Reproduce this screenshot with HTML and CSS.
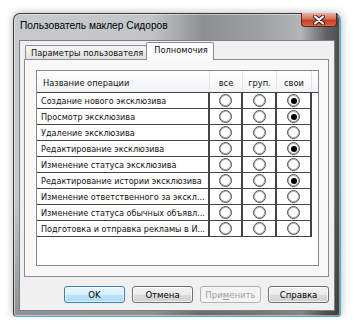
FILE: index.html
```html
<!DOCTYPE html>
<html lang="ru">
<head>
  <meta charset="UTF-8" />
  <title>Пользователь маклер Сидоров</title>
  <link rel="stylesheet" href="styles.css">
</head>
<body>

<div class="window">
  <div class="titlebar">
    <span class="title">Пользователь маклер Сидоров</span>
    <div class="close">
      <svg width="14" height="10" viewBox="0 0 14 10">
        <path d="M3 1.5 L11 8.5 M11 1.5 L3 8.5" stroke="#3a1810" stroke-width="4" stroke-linecap="round" />
        <path d="M3 1.5 L11 8.5 M11 1.5 L3 8.5" stroke="#ffffff" stroke-width="2.2" stroke-linecap="round" />
      </svg>
    </div>
  </div>

  <div class="client">
    <!-- Tabs -->
    <div class="tabs">
      <div class="tab">Параметры пользователя</div>
      <div class="tab active">Полномочия</div>
    </div>

    <div class="panel">
      <div class="grid">
        <div class="row head">
          <div class="cell name">Название операции</div>
          <div class="cell">все</div>
          <div class="cell">груп.</div>
          <div class="cell">свои</div>
          <div class="cell filler"></div>
        </div>

        <div class="row">
          <div class="cell name">Создание нового эксклюзива</div>
          <div class="cell"><span class="radio"></span></div>
          <div class="cell"><span class="radio"></span></div>
          <div class="cell"><span class="radio on"></span></div>
        </div>
        <div class="row">
          <div class="cell name">Просмотр эксклюзива</div>
          <div class="cell"><span class="radio"></span></div>
          <div class="cell"><span class="radio"></span></div>
          <div class="cell"><span class="radio on"></span></div>
        </div>
        <div class="row">
          <div class="cell name">Удаление эксклюзива</div>
          <div class="cell"><span class="radio"></span></div>
          <div class="cell"><span class="radio"></span></div>
          <div class="cell"><span class="radio"></span></div>
        </div>
        <div class="row">
          <div class="cell name">Редактирование эксклюзива</div>
          <div class="cell"><span class="radio"></span></div>
          <div class="cell"><span class="radio"></span></div>
          <div class="cell"><span class="radio on"></span></div>
        </div>
        <div class="row">
          <div class="cell name">Изменение статуса эксклюзива</div>
          <div class="cell"><span class="radio"></span></div>
          <div class="cell"><span class="radio"></span></div>
          <div class="cell"><span class="radio"></span></div>
        </div>
        <div class="row">
          <div class="cell name">Редактирование истории эксклюзива</div>
          <div class="cell"><span class="radio"></span></div>
          <div class="cell"><span class="radio"></span></div>
          <div class="cell"><span class="radio on"></span></div>
        </div>
        <div class="row">
          <div class="cell name">Изменение ответственного за экскл...</div>
          <div class="cell"><span class="radio"></span></div>
          <div class="cell"><span class="radio"></span></div>
          <div class="cell"><span class="radio"></span></div>
        </div>
        <div class="row">
          <div class="cell name">Изменение статуса обычных объявл...</div>
          <div class="cell"><span class="radio"></span></div>
          <div class="cell"><span class="radio"></span></div>
          <div class="cell"><span class="radio"></span></div>
        </div>
        <div class="row">
          <div class="cell name">Подготовка и отправка рекламы в И...</div>
          <div class="cell"><span class="radio"></span></div>
          <div class="cell"><span class="radio"></span></div>
          <div class="cell"><span class="radio"></span></div>
        </div>
      </div>
    </div>

    <!-- Actions -->
    <div class="actions">
      <button class="btn btn-default">OK</button>
      <button class="btn">Отмена</button>
      <button class="btn" disabled>При<u>м</u>енить</button>
      <button class="btn">Справка</button>
    </div>
  </div>
</div>

</body>
</html>
```

FILE: styles.css
```css
*, *::before, *::after { box-sizing: border-box; }

:root {
  --frame-line: #3b3b3b;
  --edge-cyan:  #39b8d8;
  --client-bg:  #f0f0f0;
  --tab-line:   #898c95;
  --grid-line:  #444444;
  --text:       #111111;
  --ui-font:    'DejaVu Sans Condensed', 'DejaVu Sans', sans-serif;
}

body {
  margin: 0;
  background: #ffffff;
  font-family: var(--ui-font);
  font-size: 9.2px;
  color: var(--text);
}

/* Window frame */
.window {
  margin: 13px 0 0 13px;
  width: 328px;
  border: 1px solid var(--frame-line);
  border-right-color: var(--edge-cyan);
  border-bottom-color: var(--edge-cyan);
  border-radius: 7px 7px 4px 4px;
  padding: 0 5px 5px 5px;
  background:
    linear-gradient(to bottom, rgba(0,0,0,0) 60%, rgba(40,40,40,.35) 100%),
    linear-gradient(to right, #c6cacd 0%, #c3c6c9 42%, #8e8f90 58%, #9d9fa0 75%, #b3b6b8 88%, #5f6162 96%, #4a4c4d 100%);
  box-shadow: 0 0 8px rgba(0,0,0,.3), inset 0 0 0 1px rgba(255,255,255,.45);
}

.titlebar {
  height: 26px;
  display: flex;
  align-items: flex-start;
  justify-content: space-between;
}

.title {
  margin: 6px 0 0 1px;
  font-family: 'Liberation Sans', Arial, sans-serif;
  font-size: 10.2px;
  color: #000;
}

.close {
  margin: -1px -2px 0 0;
  width: 36px;
  height: 14px;
  border: 1px solid #5b2416;
  border-top: none;
  border-radius: 0 0 4px 4px;
  background: linear-gradient(to bottom, #eab0a0 0%, #d9735c 45%, #c4401f 55%, #d6644a 100%);
  display: flex;
  align-items: center;
  justify-content: center;
}

/* Client area */
.client {
  background: var(--client-bg);
  border: 1px solid #7d7f80;
  padding: 1px 5px 7px 4px;
}

.tabs {
  display: flex;
  align-items: flex-end;
  height: 17px;
  padding-left: 1px;
}

.tab {
  height: 14px;
  padding: 0 3px 0 5px;
  line-height: 13px;
  border: 1px solid var(--tab-line);
  border-bottom: none;
  border-radius: 2px 2px 0 0;
  background: linear-gradient(to bottom, #f5f5f5, #e2e2e2);
  white-space: nowrap;
}

.tab.active {
  height: 18px;
  margin-bottom: -1px;
  margin-left: -1px;
  padding: 0 5px 0 7px;
  line-height: 14px;
  background: #fbfbfb;
  position: relative;
}

.panel {
  height: 218px;
  border: 1px solid var(--tab-line);
  background: #f8f8f8;
  padding: 10px 9px 0 11px;
}

/* Permissions grid */
.grid {
  height: 196px;
  border: 1px solid #828790;
  background: #ffffff;
}

.row {
  display: grid;
  grid-template-columns: 173px 33px 34px 35px;
  height: 16px;
  border-bottom: 1px solid var(--grid-line);
  width: 275px;
}

.row.head {
  grid-template-columns: 173px 33px 34px 35px 1fr;
  width: auto;
  height: 22px;
  background: linear-gradient(to bottom, #ffffff 0%, #f7f8fa 60%, #f1f2f4 100%);
}

.cell {
  border-right: 2px solid var(--grid-line);
  display: flex;
  align-items: center;
  justify-content: center;
  overflow: hidden;
  white-space: nowrap;
}

.cell.name {
  justify-content: flex-start;
  padding-left: 4px;
  font-size: 9px;
}

.head .cell {
  border-right: 1px solid #e3e4e6;
  padding-top: 2px;
}

.head .cell.name { padding-left: 6px; font-size: 9.2px; }
.head .cell.filler { border-right: none; }

.radio {
  width: 13px;
  height: 13px;
  border-radius: 50%;
  border: 1px solid #505050;
  background: #ffffff;
  box-shadow: inset 0 0 0 1px #b4b4b4;
  display: flex;
  align-items: center;
  justify-content: center;
}

.radio.on::after {
  content: '';
  width: 6px;
  height: 6px;
  border-radius: 50%;
  background: #000;
}

/* Buttons */
.actions {
  display: flex;
  justify-content: flex-end;
  gap: 7px;
  margin-top: 9px;
}

.btn {
  width: 61px;
  height: 17px;
  padding: 0;
  font-family: var(--ui-font);
  font-size: 9.5px;
  color: #000;
  border: 1px solid #707070;
  border-radius: 3px;
  background: linear-gradient(to bottom, #f2f2f2 0%, #ebebeb 50%, #dddddd 51%, #cfcfcf 100%);
  box-shadow: inset 0 0 0 1px rgba(255,255,255,.7);
}

.btn-default {
  border-color: #3c7fb1;
  background: linear-gradient(to bottom, #eaf6fd 0%, #d9f0fc 50%, #bee6fd 51%, #a7d9f5 100%);
}

.btn:disabled {
  color: #a0a0a0;
  border-color: #adb2b5;
  background: #f4f4f4;
  box-shadow: none;
}
```
